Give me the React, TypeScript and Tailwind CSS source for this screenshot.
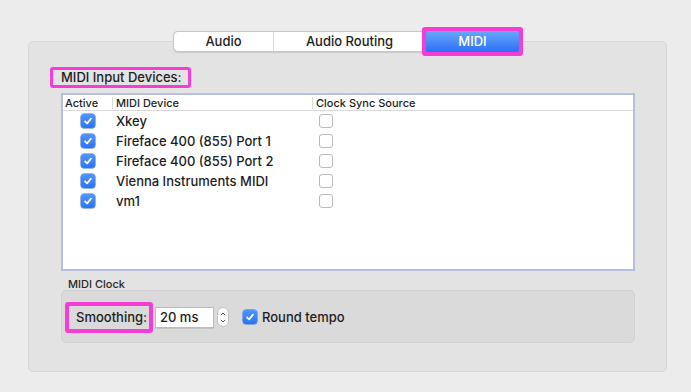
import React from "react";

const PINK = "border-[#f73cd6]";

function BlueCheck() {
  return (
    <div className="w-[14px] h-[14px] rounded-[3px] bg-gradient-to-b from-[#4f95fb] to-[#2a74f3] flex items-center justify-center shadow-[0_0_0_0.5px_#2a6ad8]">
      <svg width="10" height="10" viewBox="0 0 10 10">
        <path d="M2 5.3 L4.1 7.4 L8 2.6" fill="none" stroke="white" strokeWidth="1.7" strokeLinecap="round" strokeLinejoin="round" />
      </svg>
    </div>
  );
}

function EmptyCheck() {
  return <div className="w-[14px] h-[14px] rounded-[3px] bg-white border border-[#b9b9b9]" />;
}

const devices = ["Xkey", "Fireface 400 (855) Port 1", "Fireface 400 (855) Port 2", "Vienna Instruments MIDI", "vm1"];

export default function App() {
  return (
    <div
      className="w-[691px] h-[392px] bg-[#ececec] pt-[27px] text-[#1d1d1d]"
      style={{ fontFamily: "Inter, 'Noto Sans', sans-serif" }}
    >
      {/* tabs */}
      <div className="relative z-10 h-[29px] mb-[-15px] flex items-center pl-[173px]">
        <div className="h-[21px] flex bg-white border border-[#c6c6c6] rounded-l-[5px] shadow-[0_0.5px_1px_rgba(0,0,0,0.12)]">
          <div className="w-[99px] flex items-center justify-center text-[13px] font-medium leading-none">Audio</div>
          <div className="w-[152px] border-l border-[#d8d8d8] flex items-center justify-center text-[13px] font-medium leading-none">
            Audio Routing
          </div>
        </div>
        <div className={`ml-[-4px] h-[29px] border-4 ${PINK} rounded-[3px] bg-[#f73cd6]`}>
          <div className="w-[93px] h-full rounded-[2px] bg-gradient-to-b from-[#69a7fc] to-[#2e6ef5] flex items-center justify-center text-white text-[13px] font-medium leading-none">
            MIDI
          </div>
        </div>
      </div>

      {/* panel */}
      <div className="ml-[28px] w-[639px] h-[331px] bg-[#e3e3e3] border border-[#d7d7d7] rounded-[5px] pt-[25px] pl-[32px] pr-[31px]">
        <div className={`ml-[-11px] w-[141px] h-[21px] border-[3px] ${PINK} rounded-[3px] flex items-center pl-[8px] text-[13px] font-medium leading-none`}>
          MIDI Input Devices:
        </div>

        <div className="mt-[5px] w-[574px] h-[178px] bg-white border-2 border-[#b7bfdf] flex flex-col">
          <div className="h-[16px] pt-[1px] flex border-b border-[#dadada] text-[11px] font-medium leading-none">
            <div className="w-[49px] pl-[2px] flex items-center">Active</div>
            <div className="w-[200px] border-l border-[#dcdcdc] pl-[3px] flex items-center my-[1px]">MIDI Device</div>
            <div className="flex-1 border-l border-[#dcdcdc] pl-[3px] flex items-center my-[1px]">Clock Sync Source</div>
          </div>
          {devices.map((d) => (
            <div key={d} className="h-[20px] flex items-center text-[13px] font-medium leading-none">
              <div className="w-[50px] flex justify-center">
                <BlueCheck />
              </div>
              <div className="w-[200px] pl-[3px]">{d}</div>
              <div className="pl-[6px]">
                <EmptyCheck />
              </div>
            </div>
          ))}
        </div>

        <div className="mt-[6px] h-[13px] pl-[7px] text-[11px] leading-[14px] font-medium text-[#2a2a2a]">MIDI Clock</div>

        <div className="w-[574px] h-[53px] bg-[#dadada] border border-[#d2d2d2] rounded-[5px] flex items-center pl-[3px] pt-[1px]">
          <div className={`w-[88px] h-[31px] border-4 ${PINK} rounded-[3px] flex items-center pl-[7px] text-[13px] font-medium leading-none`}>
            Smoothing:
          </div>
          <div className="ml-[2px] w-[59px] h-[21px] bg-white border border-[#bcbcbc] shadow-[0_0.5px_1px_rgba(0,0,0,0.1)] flex items-center pl-[4px] text-[13px] font-medium leading-none">
            20 ms
          </div>
          <div className="ml-[3px] w-[12px] h-[20px] bg-white border border-[#c2c2c2] rounded-[6px] flex flex-col items-center justify-center gap-[3px]">
            <svg width="6" height="4" viewBox="0 0 6 4">
              <path d="M0.8 3.2 L3 1 L5.2 3.2" fill="none" stroke="#555" strokeWidth="1" />
            </svg>
            <svg width="6" height="4" viewBox="0 0 6 4">
              <path d="M0.8 0.8 L3 3 L5.2 0.8" fill="none" stroke="#555" strokeWidth="1" />
            </svg>
          </div>
          <div className="ml-[14px]">
            <BlueCheck />
          </div>
          <div className="ml-[5px] text-[13px] font-medium leading-none">Round tempo</div>
        </div>
      </div>
    </div>
  );
}
